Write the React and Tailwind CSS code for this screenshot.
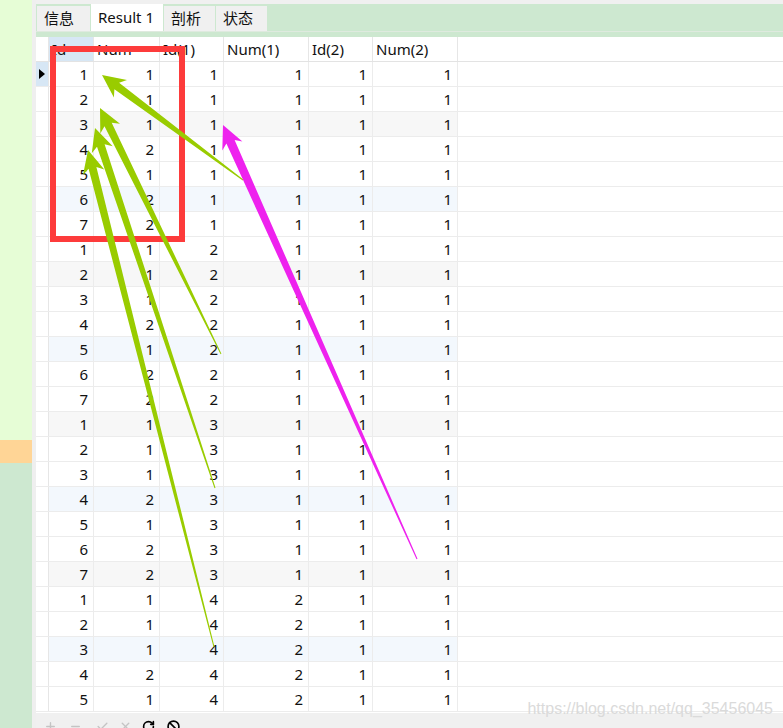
import { Plus, Minus, Check, X, RotateCw, Ban } from 'lucide-react'

const COLS = [
  { key: 'id', label: 'Id', w: 'w-[45px]' },
  { key: 'num', label: 'Num', w: 'w-[66px]' },
  { key: 'id1', label: 'Id(1)', w: 'w-[64px]' },
  { key: 'num1', label: 'Num(1)', w: 'w-[85px]' },
  { key: 'id2', label: 'Id(2)', w: 'w-[64px]' },
  { key: 'num2', label: 'Num(2)', w: 'w-[85px]' },
]

const NUMS = [1, 1, 1, 2, 1, 2, 2]

const rows = Array.from({ length: 26 }, (_, i) => ({
  id: (i % 7) + 1,
  num: NUMS[i % 7],
  id1: Math.floor(i / 7) + 1,
  num1: i < 21 ? 1 : 2,
  id2: 1,
  num2: 1,
}))

function rowBg(i) {
  if (i % 3 !== 2) return 'bg-white'
  return Math.floor(i / 3) % 2 === 0 ? 'bg-[#f7f7f7]' : 'bg-[#f3f8fd]'
}

// tapered screenshot-tool arrow: thin tail, swept-back head
function arrowPoints(tx, ty, sx, sy, neck = 4, L = 23, W = 11) {
  const dx = tx - sx
  const dy = ty - sy
  const len = Math.hypot(dx, dy)
  const ux = dx / len
  const uy = dy / len
  const nx = -uy
  const ny = ux
  const p = (x, y) => `${x.toFixed(1)},${y.toFixed(1)}`
  const nb = L * 0.8
  return [
    p(sx + nx * 0.5, sy + ny * 0.5),
    p(tx - ux * nb + nx * neck, ty - uy * nb + ny * neck),
    p(tx - ux * L + nx * W, ty - uy * L + ny * W),
    p(tx, ty),
    p(tx - ux * L - nx * W, ty - uy * L - ny * W),
    p(tx - ux * nb - nx * neck, ty - uy * nb - ny * neck),
    p(sx - nx * 0.5, sy - ny * 0.5),
  ].join(' ')
}

function Overlay() {
  return (
    <svg className="absolute inset-0 pointer-events-none" width="783" height="728" viewBox="0 0 783 728">
      <rect x="53" y="49" width="129" height="190" fill="none" stroke="#fd3b3b" strokeWidth="6" />
      <polygon points={arrowPoints(102, 75, 243, 180, 4)} fill="#99cc00" />
      <polygon points={arrowPoints(100, 108, 221, 354, 4)} fill="#99cc00" />
      <polygon points={arrowPoints(95, 128, 215, 488, 4)} fill="#99cc00" />
      <polygon points={arrowPoints(88, 150, 214, 647, 4)} fill="#99cc00" />
      <polygon points={arrowPoints(223, 125, 417, 559, 4.5)} fill="#ee22ee" />
    </svg>
  )
}

function Tab({ label, active, w }) {
  return (
    <div
      className={`${w} flex items-center pl-[7px] ${
        active ? 'h-[27px] bg-white' : 'h-[25px] bg-[#f0f0f0]'
      }`}
    >
      {label}
    </div>
  )
}

export default function App() {
  return (
    <div
      className="relative w-[783px] h-[728px] flex overflow-hidden text-[15px] text-[#111]"
      style={{ fontFamily: '"Noto Sans", "Noto Sans CJK SC", sans-serif' }}
    >
      <div className="w-[32px] flex flex-col">
        <div className="h-[440px] bg-[#e6fdd6]" />
        <div className="h-[23px] bg-[#ffd596]" />
        <div className="flex-1 bg-[#cde8d0]" />
      </div>
      <div className="w-[4px] bg-[#efefef]" />

      <div className="flex-1 flex flex-col">
        <div className="h-[4px] bg-[#f0f0f0]" />
        <div className="h-[27px] bg-[#cde8d0] flex items-end gap-px pl-px leading-none">
          <Tab label="信息" w="w-[53px]" />
          <Tab label="Result 1" w="w-[72px]" active />
          <Tab label="剖析" w="w-[51px]" />
          <Tab label="状态" w="w-[51px]" />
        </div>
        <div className="h-px bg-[#dfeadf]" />
        <div className="h-[5px] bg-[#cde8d0]" />

        <div className="flex-1 bg-white relative">
          <div className="flex h-[25px] leading-[25px] border-b border-[#e3e3e3]">
            <div className="w-[13px] border-r border-[#e6e6e6]" />
            {COLS.map((c, ci) => (
              <div
                key={c.key}
                className={`${c.w} pl-[3px] border-r border-[#e6e6e6] ${ci === 0 ? 'bg-[#d7e7f5]' : ''}`}
              >
                {c.label}
              </div>
            ))}
          </div>
          {rows.map((r, i) => (
            <div key={i} className="flex h-[25px] leading-[24px] border-b border-[#ececec]">
              <div
                className={`w-[13px] border-r border-[#e6e6e6] flex items-center justify-center ${
                  i === 0 ? 'bg-[#d7e7f5]' : 'bg-white'
                }`}
              >
                {i === 0 && (
                  <span className="block w-0 h-0 border-y-[5px] border-y-transparent border-l-[6px] border-l-black" />
                )}
              </div>
              {COLS.map((c) => (
                <div key={c.key} className={`${c.w} ${rowBg(i)} text-right pr-[5px] border-r border-[#ececec]`}>
                  {r[c.key]}
                </div>
              ))}
            </div>
          ))}
          <div
            className="absolute right-[10px] bottom-[-4px] text-[16px] text-[#dadada] leading-none"
            style={{ fontFamily: '"Liberation Sans", Arial, sans-serif' }}
          >
            https://blog.csdn.net/qq_35456045
          </div>
        </div>

        <div className="h-[15px] bg-[#f0f0f0] flex items-start pl-[8px] pt-[7px] gap-[10px] overflow-hidden">
          <Plus size={13} strokeWidth={2.5} className="text-[#c4c4c4] shrink-0" />
          <Minus size={13} strokeWidth={2.5} className="text-[#c4c4c4] shrink-0 ml-[2px]" />
          <Check size={13} strokeWidth={2.5} className="text-[#c4c4c4] shrink-0 ml-[4px]" />
          <X size={13} strokeWidth={2.5} className="text-[#c4c4c4] shrink-0" />
          <RotateCw size={13} strokeWidth={3} className="text-black shrink-0" />
          <Ban size={13} strokeWidth={3} className="text-black shrink-0 ml-[2px]" />
        </div>
      </div>

      <Overlay />
    </div>
  )
}
